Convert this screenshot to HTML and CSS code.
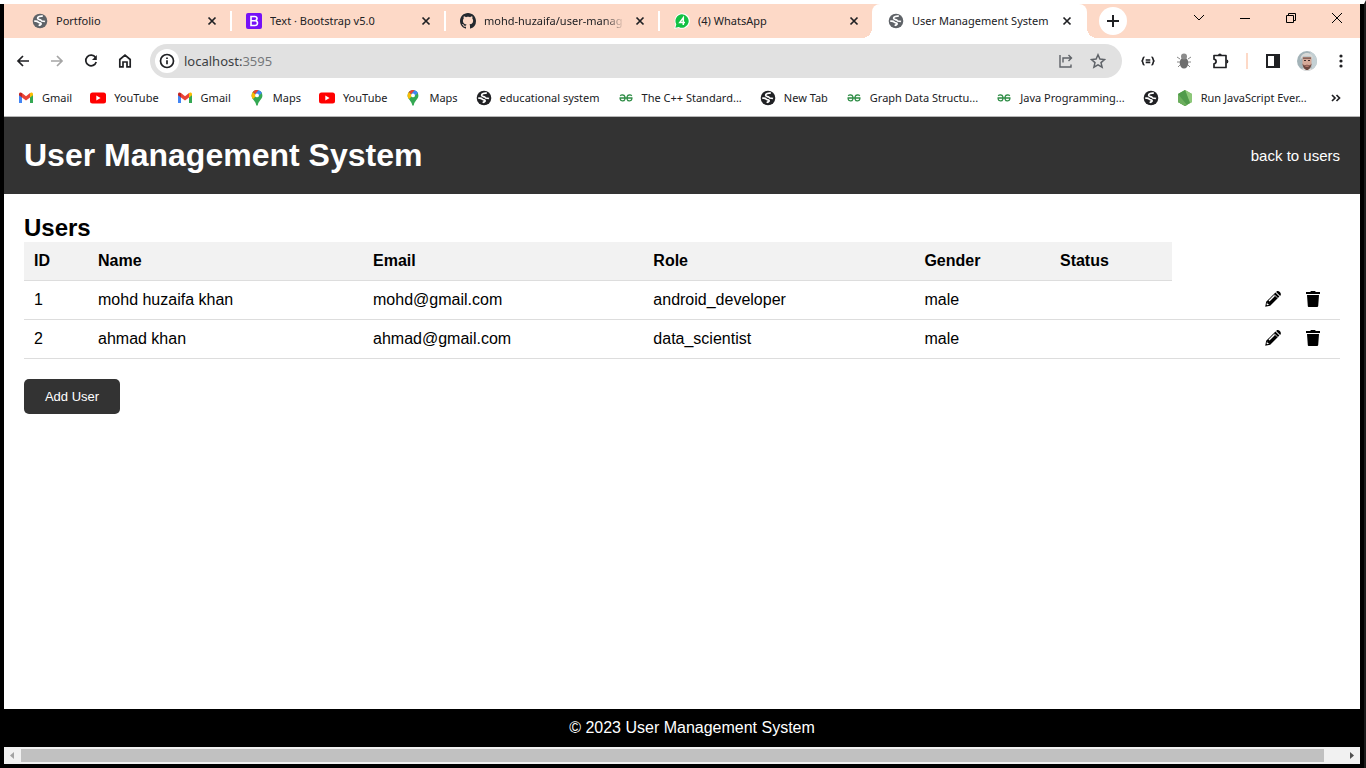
FILE: index.html
```html
<!DOCTYPE html>
<html lang="en">
<head>
<meta charset="utf-8">
<title>User Management System</title>
<link rel="stylesheet" href="styles.css">
</head>
<body>
<svg class="defs" aria-hidden="true">
  <symbol id="globe" viewBox="0 0 16 16"><circle cx="8" cy="8" r="7.300" fill="currentColor"/><path d="M10.800 3.200C8.300 2.800 5.500 3.600 5.600 5.300c.1 1.800 2.900.7 3.600 2.200.5 1.200 2.500.4 3.800 1M2.200 8.300c2-.5 3.300 0 4.200 1 .8.900 3 .3 2.700 1.700-.2.900-1.600.8-2.100 1.800" fill="none" stroke="#fff" stroke-width="1.700"/></symbol>
  <symbol id="x" viewBox="0 0 10 10"><path d="m1.500 1.500 7 7m0-7-7 7" fill="none" stroke="currentColor" stroke-width="1.700"/></symbol>
  <symbol id="gmail" viewBox="0 0 16 12"><path d="M1 2v9h3V5z" fill="#4285f4"/><path d="M12 5v6h3V2z" fill="#34a853"/><path d="m4 1 4 3.300L12 1v4.500L8 8.500l-4-3z" fill="#ea4335"/><path d="M1 2c0-1.600 1.800-2 3-1v4.500L1 3.300z" fill="#c5221f"/><path d="M12 1c1.200-1 3-.6 3 1v1.300l-3 2.200z" fill="#fbbc04"/></symbol>
  <symbol id="youtube" viewBox="0 0 16 12"><rect y=".5" width="16" height="11" rx="2.500" fill="#f00"/><path d="m6.300 3.600 4.300 2.400-4.300 2.400z" fill="#fff"/></symbol>
  <symbol id="maps" viewBox="0 0 12 16"><path d="M6 0a5.400 5.400 0 0 1 5.400 5.400c0 4-3.900 5.100-4.600 9.600-.2 1-1.400 1-1.600 0C4.500 10.500.6 9.400.6 5.400A5.400 5.400 0 0 1 6 0z" fill="#34a853"/><path d="M2.100 9.100C1.200 8 .6 7 .6 5.400c0-1 .4-2.300 1.200-3.300L4.500 4.500v2z" fill="#fbbc04"/><path d="M1.800 2.100A5.400 5.400 0 0 1 7.500.2L4.300 4.200z" fill="#ea4335"/><path d="M7.500.2c1.500.4 2.700 1.300 3.400 2.700L7 6.500 4.300 4z" fill="#4285f4"/><circle cx="6" cy="5.400" r="1.900" fill="#fff"/></symbol>
  <symbol id="gfg" viewBox="0 0 16 8"><path d="M1.500 4h13M2.200 1.800c1-1.200 4-1.200 4.600.7v3c-.7 2-4.300 2-4.800-.8M13.800 1.800c-1-1.200-4-1.200-4.600.7v3c.7 2 4.300 2 4.800-.8" fill="none" stroke="#2f8d46" stroke-width="1.300"/></symbol>
  <symbol id="pencil" viewBox="0 0 16 16"><path d="m.2 15.800 1-5L10.400 1.600l4 4L5.200 14.800z"/><path d="m11.100.9.500-.5c1.800-1.500 5.200 1.800 4 3.800l-.5.700z"/><path d="m9.200 3.600 3.200 3.200" stroke="#fff" stroke-width=".8"/><path d="m3.500 9.600 5.500-5.500 1 1-5.500 5.500zM2.100 11.300l.5 1.700 1.800.6-2.100.6-.8-.7z" fill="#fff"/></symbol>
  <symbol id="trash" viewBox="0 0 14 16"><path d="M0 1h4.200l.8-1h4l.8 1H14v2H0zM1 4h12l-.8 11c-.1.700-.5 1-1.100 1H2.900c-.7 0-1-.3-1.100-1z"/></symbol>
</svg>
<div class="browser">
  <header class="chrome">
    <div class="tabstrip">
      <div class="tab"><svg class="icon muted"><use href="#globe"/></svg><span class="tab-title">Portfolio</span><button class="close" aria-label="Close tab"><svg><use href="#x"/></svg></button></div>
      <div class="tab"><svg class="icon" viewBox="0 0 16 16"><rect width="16" height="16" rx="2" fill="#7611f7"/><path d="M5 3.500h3.700c3 0 3 3.700.5 4.200 3.200.3 3 4.800-.4 4.800H5zM5 7.700h4" fill="none" stroke="#fff" stroke-width="1.600"/></svg><span class="tab-title">Text · Bootstrap v5.0</span><button class="close" aria-label="Close tab"><svg><use href="#x"/></svg></button></div>
      <div class="tab"><svg class="icon" viewBox="0 0 16 16"><path fill="#24292f" d="M8 0C3.580 0 0 3.580 0 8c0 3.540 2.290 6.530 5.470 7.590.4.070.55-.17.55-.38 0-.19-.01-.82-.01-1.490-2.010.37-2.530-.49-2.690-.94-.09-.23-.48-.94-.82-1.130-.28-.15-.68-.52-.01-.53.63-.01 1.080.58 1.230.82.720 1.210 1.870.87 2.330.66.070-.52.280-.87.510-1.070-1.780-.2-3.640-.89-3.640-3.950 0-.87.310-1.590.82-2.150-.08-.2-.36-1.020.08-2.120 0 0 .67-.21 2.200.82.640-.18 1.320-.27 2-.27s1.360.09 2 .27c1.530-1.040 2.200-.82 2.200-.82.440 1.100.16 1.920.08 2.120.51.560.82 1.270.82 2.150 0 3.070-1.870 3.750-3.650 3.950.29.250.54.730.54 1.480 0 1.070-.01 1.930-.01 2.200 0 .21.150.46.550.38A8 8 0 0 0 16 8c0-4.420-3.580-8-8-8z"/></svg><span class="tab-title fade">mohd-huzaifa/user-manag</span><button class="close" aria-label="Close tab"><svg><use href="#x"/></svg></button></div>
      <div class="tab"><svg class="icon" viewBox="0 0 16 16"><path d="M8 .2a7.800 7.800 0 1 1-3.300 14.800L.2 15.800l1.200-4.400A7.800 7.800 0 0 1 8 .2z" fill="#fff"/><path d="M8 1.300a6.700 6.700 0 1 1-3.200 12.600l-3.400.8.900-3.400A6.700 6.700 0 0 1 8 1.300z" fill="#12c143"/><path d="M9.300 12V4.700L5.800 9.400H11" fill="none" stroke="#fff" stroke-width="1.500"/></svg><span class="tab-title">(4) WhatsApp</span><button class="close" aria-label="Close tab"><svg><use href="#x"/></svg></button></div>
      <div class="tab active"><svg class="icon muted"><use href="#globe"/></svg><span class="tab-title">User Management System</span><button class="close" aria-label="Close tab"><svg><use href="#x"/></svg></button></div>
      <button class="new-tab" aria-label="New tab"><svg viewBox="0 0 12 12"><path d="M6 0v12M0 6h12" stroke="currentColor" stroke-width="2"/></svg></button>
      <div class="window-controls">
        <button aria-label="Search tabs"><svg viewBox="0 0 12 12"><path d="m1 3 5 5 5-5"/></svg></button>
        <button aria-label="Minimize"><svg viewBox="0 0 12 12"><path d="M1 6.500h10"/></svg></button>
        <button aria-label="Restore"><svg viewBox="0 0 12 12"><path d="M1.500 3.500h7v7h-7zM3.500 3.500v-2h7v7h-2"/></svg></button>
        <button aria-label="Close"><svg viewBox="0 0 12 12"><path d="m1 1 10 10M11 1 1 11"/></svg></button>
      </div>
    </div>
    <div class="toolbar">
      <nav class="nav-buttons" aria-label="Navigation">
        <button aria-label="Back"><svg viewBox="0 0 16 16"><path d="M14 8H3M8 3 3 8l5 5"/></svg></button>
        <button class="disabled" aria-label="Forward" disabled><svg viewBox="0 0 16 16"><path d="M2 8h11M8 3l5 5-5 5"/></svg></button>
        <button aria-label="Reload"><svg viewBox="0 0 16 16"><path d="M12.500 4.500A5.300 5.300 0 1 0 13.200 9"/><path d="M13.800 2v5H9z" fill="currentColor" stroke="none"/></svg></button>
        <button aria-label="Home"><svg viewBox="0 0 16 16"><path d="M2.800 6.500 8 2.200l5.200 4.300v7.300H10V9H6v4.800H2.800z"/></svg></button>
      </nav>
      <div class="omnibox">
        <button class="site-info" aria-label="View site information"><svg viewBox="0 0 16 16"><circle cx="8" cy="8" r="6.500"/><path d="M8 7.200v4M8 4.500v1.600"/></svg></button>
        <span class="url" role="textbox" aria-label="Address">localhost:<span>3595</span></span>
        <button aria-label="Share"><svg viewBox="0 0 16 16"><path d="M2 2v12h11v-2.500M5 9.500V5h8M10.500 2l3 3-3 3" stroke-width="1.400"/></svg></button>
        <button aria-label="Bookmark"><svg viewBox="0 0 16 16"><path d="m8 1.800 1.900 4.300 4.600.4L11 9.600l1.100 4.600L8 11.800l-4.100 2.400L5 9.600 1.500 6.500l4.600-.4z" stroke-width="1.500"/></svg></button>
      </div>
      <div class="extensions">
        <button aria-label="JSON viewer"><svg viewBox="0 0 16 16"><path d="M4.500 4C2 4 4 7.800 1.500 8 4 8.200 2 12 4.500 12M11.500 4c2.500 0 .5 3.800 3 4-2.500.2-.5 4-3 4M5.700 7h4.600M5.700 9.300h4.600"/></svg></button>
        <button aria-label="Debugger"><svg viewBox="0 0 16 16"><path d="M1 4l3 2M15 4l-3 2M1 9h14M2 14l3-3M14 14l-3-3" stroke="#888" stroke-width="1"/><ellipse cx="8" cy="10" rx="4.300" ry="5.500" fill="#6e6e6e" stroke="none"/><circle cx="8" cy="3.500" r="3" fill="#8c8c8c" stroke="none"/></svg></button>
        <button aria-label="Extensions"><svg viewBox="0 0 18 18"><path d="M3 3.500h12v12H3v-3.700c2.800-.5 2.800-4.100 0-4.600z" stroke-width="1.700" stroke-linejoin="round"/><path d="M7 3.500a1.900 1.900 0 0 1 3.800 0zM15.500 7.600a1.900 1.900 0 0 1 0 3.800z" fill="currentColor" stroke="none"/></svg></button>
        <span class="divider"></span>
        <button aria-label="Side panel"><svg viewBox="0 0 16 16"><path d="M2 2h12v12H2z" stroke-width="2"/><path d="M9 2h5v12H9z" fill="currentColor" stroke="none"/></svg></button>
        <button aria-label="Profile"><svg class="avatar" viewBox="0 0 20 20"><clipPath id="round"><circle cx="10" cy="10" r="10"/></clipPath><g clip-path="url(#round)" stroke="none"><path d="M0 0h20v20H0z" fill="#a3b3b8"/><path d="M13 0h7v20h-5z" fill="#c4d0d4"/><path d="M2 20c1-4 15-4 16 0z" fill="#e2dedc"/><path d="M5.500 6h9v6.500c0 3.500-2.500 6-4.500 6s-4.500-2.500-4.500-6z" fill="#d6a998"/><path d="M3.500 9C3 0 16 0 16 8l-2-2.500H6z" fill="#d8d9d7"/><path d="M6 6.500h8v1.300H6z" fill="#6d4c44"/><path d="M7 9h2v1H7zM11 9h2v1h-2z" fill="#3d2927"/><path d="M5.500 12.500 7 14.500c2-1 4-1 6 0l1.500-2c-.3 4-2.500 6.500-4.500 6.500s-4.200-2.500-4.500-6.500z" fill="#6d4840"/><path d="M8.300 14.500h3.400v1.200H8.300z" fill="#c98578"/></g></svg></button>
        <button class="menu" aria-label="Menu"><svg viewBox="0 0 16 16"><g fill="currentColor" stroke="none"><circle cx="8" cy="3" r="1.600"/><circle cx="8" cy="8" r="1.600"/><circle cx="8" cy="13" r="1.600"/></g></svg></button>
      </div>
    </div>
    <nav class="bookmarks" aria-label="Bookmarks">
      <a href="#"><svg><use href="#gmail"/></svg>Gmail</a>
      <a href="#"><svg><use href="#youtube"/></svg>YouTube</a>
      <a href="#"><svg><use href="#gmail"/></svg>Gmail</a>
      <a href="#"><svg><use href="#maps"/></svg>Maps</a>
      <a href="#"><svg><use href="#youtube"/></svg>YouTube</a>
      <a href="#"><svg><use href="#maps"/></svg>Maps</a>
      <a href="#"><svg><use href="#globe"/></svg>educational system</a>
      <a href="#"><svg><use href="#gfg"/></svg>The C++ Standard...</a>
      <a href="#"><svg><use href="#globe"/></svg>New Tab</a>
      <a href="#"><svg><use href="#gfg"/></svg>Graph Data Structu...</a>
      <a href="#"><svg><use href="#gfg"/></svg>Java Programming...</a>
      <a href="#" aria-label="Bookmark"><svg><use href="#globe"/></svg></a>
      <a href="#"><svg viewBox="0 0 16 16"><path d="m8 0 7 4v8l-7 4-7-4V4z" fill="#6cb454"/><path d="m8 0 7 4v8l-2 1.200z" fill="#8cc779"/><path d="m1 4 7-4 5 13-5 3-7-4z" fill="#509b4b"/><path d="m1 4 9 11-2 1-7-4z" fill="#6cae5d"/></svg>Run JavaScript Ever...</a>
      <button class="more" aria-label="More bookmarks"><svg viewBox="0 0 10 10"><path d="m1 2 3 3-3 3M5.500 2l3 3-3 3"/></svg></button>
    </nav>
  </header>
  <div class="page">
    <header class="site-header">
      <h1>User Management System</h1>
      <a href="#">back to users</a>
    </header>
    <main>
      <h2>Users</h2>
      <table>
        <colgroup><col class="c-id"><col class="c-name"><col class="c-email"><col class="c-role"><col class="c-gender"><col class="c-status"><col></colgroup>
        <thead><tr><th>ID</th><th>Name</th><th>Email</th><th>Role</th><th>Gender</th><th>Status</th></tr></thead>
        <tbody>
          <tr><td>1</td><td>mohd huzaifa khan</td><td>mohd@gmail.com</td><td>android_developer</td><td>male</td><td></td><td><div class="actions"><button aria-label="Edit mohd huzaifa khan"><svg><use href="#pencil"/></svg></button><button aria-label="Delete mohd huzaifa khan"><svg><use href="#trash"/></svg></button></div></td></tr>
          <tr><td>2</td><td>ahmad khan</td><td>ahmad@gmail.com</td><td>data_scientist</td><td>male</td><td></td><td><div class="actions"><button aria-label="Edit ahmad khan"><svg><use href="#pencil"/></svg></button><button aria-label="Delete ahmad khan"><svg><use href="#trash"/></svg></button></div></td></tr>
        </tbody>
      </table>
      <button class="add">Add User</button>
    </main>
    <footer>© 2023 User Management System</footer>
  </div>
  <div class="scrollbar" aria-hidden="true">
    <svg viewBox="0 0 17 17"><path d="M10 5v7L6 8.500z" fill="#a3a3a3"/></svg>
    <div class="track"><div class="thumb"></div></div>
    <svg viewBox="0 0 17 17"><path d="M7 5v7l4-3.500z" fill="#505050"/></svg>
  </div>
</div>
</body>
</html>
```

FILE: styles.css
```css
* { box-sizing: border-box; margin: 0; padding: 0; }
body {
  height: 100vh;
  overflow: hidden;
  background: #000;
  border-top: 4px solid #fff;
  border-right: 2px solid #1c1c1c;
  font-family: "Liberation Sans", Arial, sans-serif;
}
button { border: 0; background: none; color: inherit; font: inherit; display: grid; place-items: center; flex: none; }
a { color: inherit; text-decoration: none; }
svg { display: block; flex: none; }
.defs { position: absolute; width: 0; height: 0; }
.browser { height: 100%; padding: 0 4px 4px; display: flex; flex-direction: column; }

.chrome { background: #fff; color: #202124; font: 11px/16px "Noto Sans", "Open Sans", sans-serif; border-bottom: 1px solid #b6b6b6; }
.tabstrip { display: flex; align-items: center; height: 34px; padding-left: 14px; background: #fdd9c7; }
.tab { display: flex; align-items: center; gap: 8px; flex: 0 1 214px; min-width: 0; height: 34px; padding: 0 13px 0 14px; position: relative; }
.tab:nth-child(-n+3)::after { content: ""; position: absolute; right: 0; width: 2px; height: 20px; background: #fff; }
.icon { width: 16px; height: 16px; }
.muted { color: #5f6368; }
.tab-title { flex: 1; overflow: hidden; white-space: nowrap; }
.fade { mask-image: linear-gradient(to right, #000 85%, transparent); }
.close svg { width: 10px; height: 10px; }
.tab .close { width: 14px; height: 14px; }
.tab.active { flex-basis: 215px; margin-left: -2px; padding-left: 16px; background: #fff; border-radius: 8px 8px 0 0; }
.active::before, .active::after { content: ""; position: absolute; bottom: 0; width: 10px; height: 10px; }
.active::before { right: 100%; background: radial-gradient(circle at 0 0, transparent 10px, #fff 10px); }
.active::after { left: 100%; background: radial-gradient(circle at 100% 0, transparent 10px, #fff 10px); }
.new-tab { width: 28px; height: 28px; margin-left: 12px; border-radius: 50%; background: #fff; }
.new-tab svg { width: 12px; height: 12px; }
.window-controls { display: flex; height: 28px; margin: 0 0 6px auto; }
.window-controls button { width: 46px; }
.window-controls svg { width: 12px; height: 12px; fill: none; stroke: #000; }

.toolbar { display: flex; align-items: center; height: 46px; padding: 0 8px 0 2px; }
.toolbar svg { width: 16px; height: 16px; fill: none; stroke: currentColor; stroke-width: 1.7; }
.nav-buttons, .extensions { display: flex; align-items: center; }
.nav-buttons button { width: 34px; height: 34px; }
.disabled { color: #a5a5a5; }
.omnibox { flex: 1; display: flex; align-items: center; height: 34px; margin-left: 8px; padding: 0 8px 0 5px; border-radius: 17px; background: #e1e1e1; color: #5f6368; }
.omnibox button { width: 32px; }
.omnibox .site-info { width: 24px; height: 24px; border-radius: 50%; background: #fff; color: #202124; }
.url { flex: 1; margin-left: 5px; color: #3c4043; font-size: 13px; }
.url span { color: #75787b; }
.extensions { margin-left: 8px; }
.extensions button { width: 36px; }
.extensions button:nth-child(3) svg { width: 18px; height: 18px; }
.divider { width: 2px; height: 16px; margin: 0 8px; background: #fdd9c7; }
.extensions .divider + button { width: 33px; }
.extensions .avatar { width: 20px; height: 20px; }
.extensions .menu { width: 32px; margin-right: -5px; }

.bookmarks { display: flex; align-items: center; gap: 18px; height: 32px; padding: 0 16px 4px 14px; }
.bookmarks a { display: flex; align-items: center; gap: 8px; white-space: nowrap; }
.bookmarks a svg { width: 16px; height: 16px; }
.bookmarks .more { width: 16px; margin-left: auto; }
.more svg { width: 10px; height: 10px; fill: none; stroke: currentColor; stroke-width: 1.7; }

.page { flex: 1; display: flex; flex-direction: column; min-height: 0; background: #fff; color: #000; font-size: 16px; }
.site-header { display: flex; align-items: center; justify-content: space-between; padding: 20px; background: #333; color: #fff; }
h1 { font-size: 32px; line-height: 37px; }
.site-header a { font-size: 15px; line-height: 18px; }
main { flex: 1; padding: 20px; }
h2 { font-size: 24px; line-height: 28px; }
table { width: 100%; border-collapse: collapse; table-layout: fixed; line-height: 18px; }
th, td { padding: 10px; text-align: left; vertical-align: top; border-bottom: 1px solid #ddd; }
th { background: #f2f2f2; }
.c-id { width: 64px; }
.c-name { width: 20.9%; }
.c-email { width: 21.3%; }
.c-role { width: 20.6%; }
.c-gender { width: 10.3%; }
.c-status { width: 9.3%; }
.actions { display: flex; justify-content: flex-end; gap: 25px; padding-right: 10px; }
.actions svg { width: 16px; height: 16px; }
.actions button + button svg { width: 14px; }
.add { height: 35px; min-width: 96px; margin-top: 20px; padding: 0 20px; border-radius: 5px; background: #333; color: #fff; font-size: 13px; }
footer { padding: 10px 0 10px 20px; background: #000; color: #fff; line-height: 18px; text-align: center; }
.scrollbar { display: flex; height: 17px; background: #f1f1f1; }
.scrollbar svg { width: 17px; height: 17px; }
.track { flex: 1; padding: 2px 0; }
.thumb { width: 98.6%; height: 13px; background: #c1c1c1; }
```
